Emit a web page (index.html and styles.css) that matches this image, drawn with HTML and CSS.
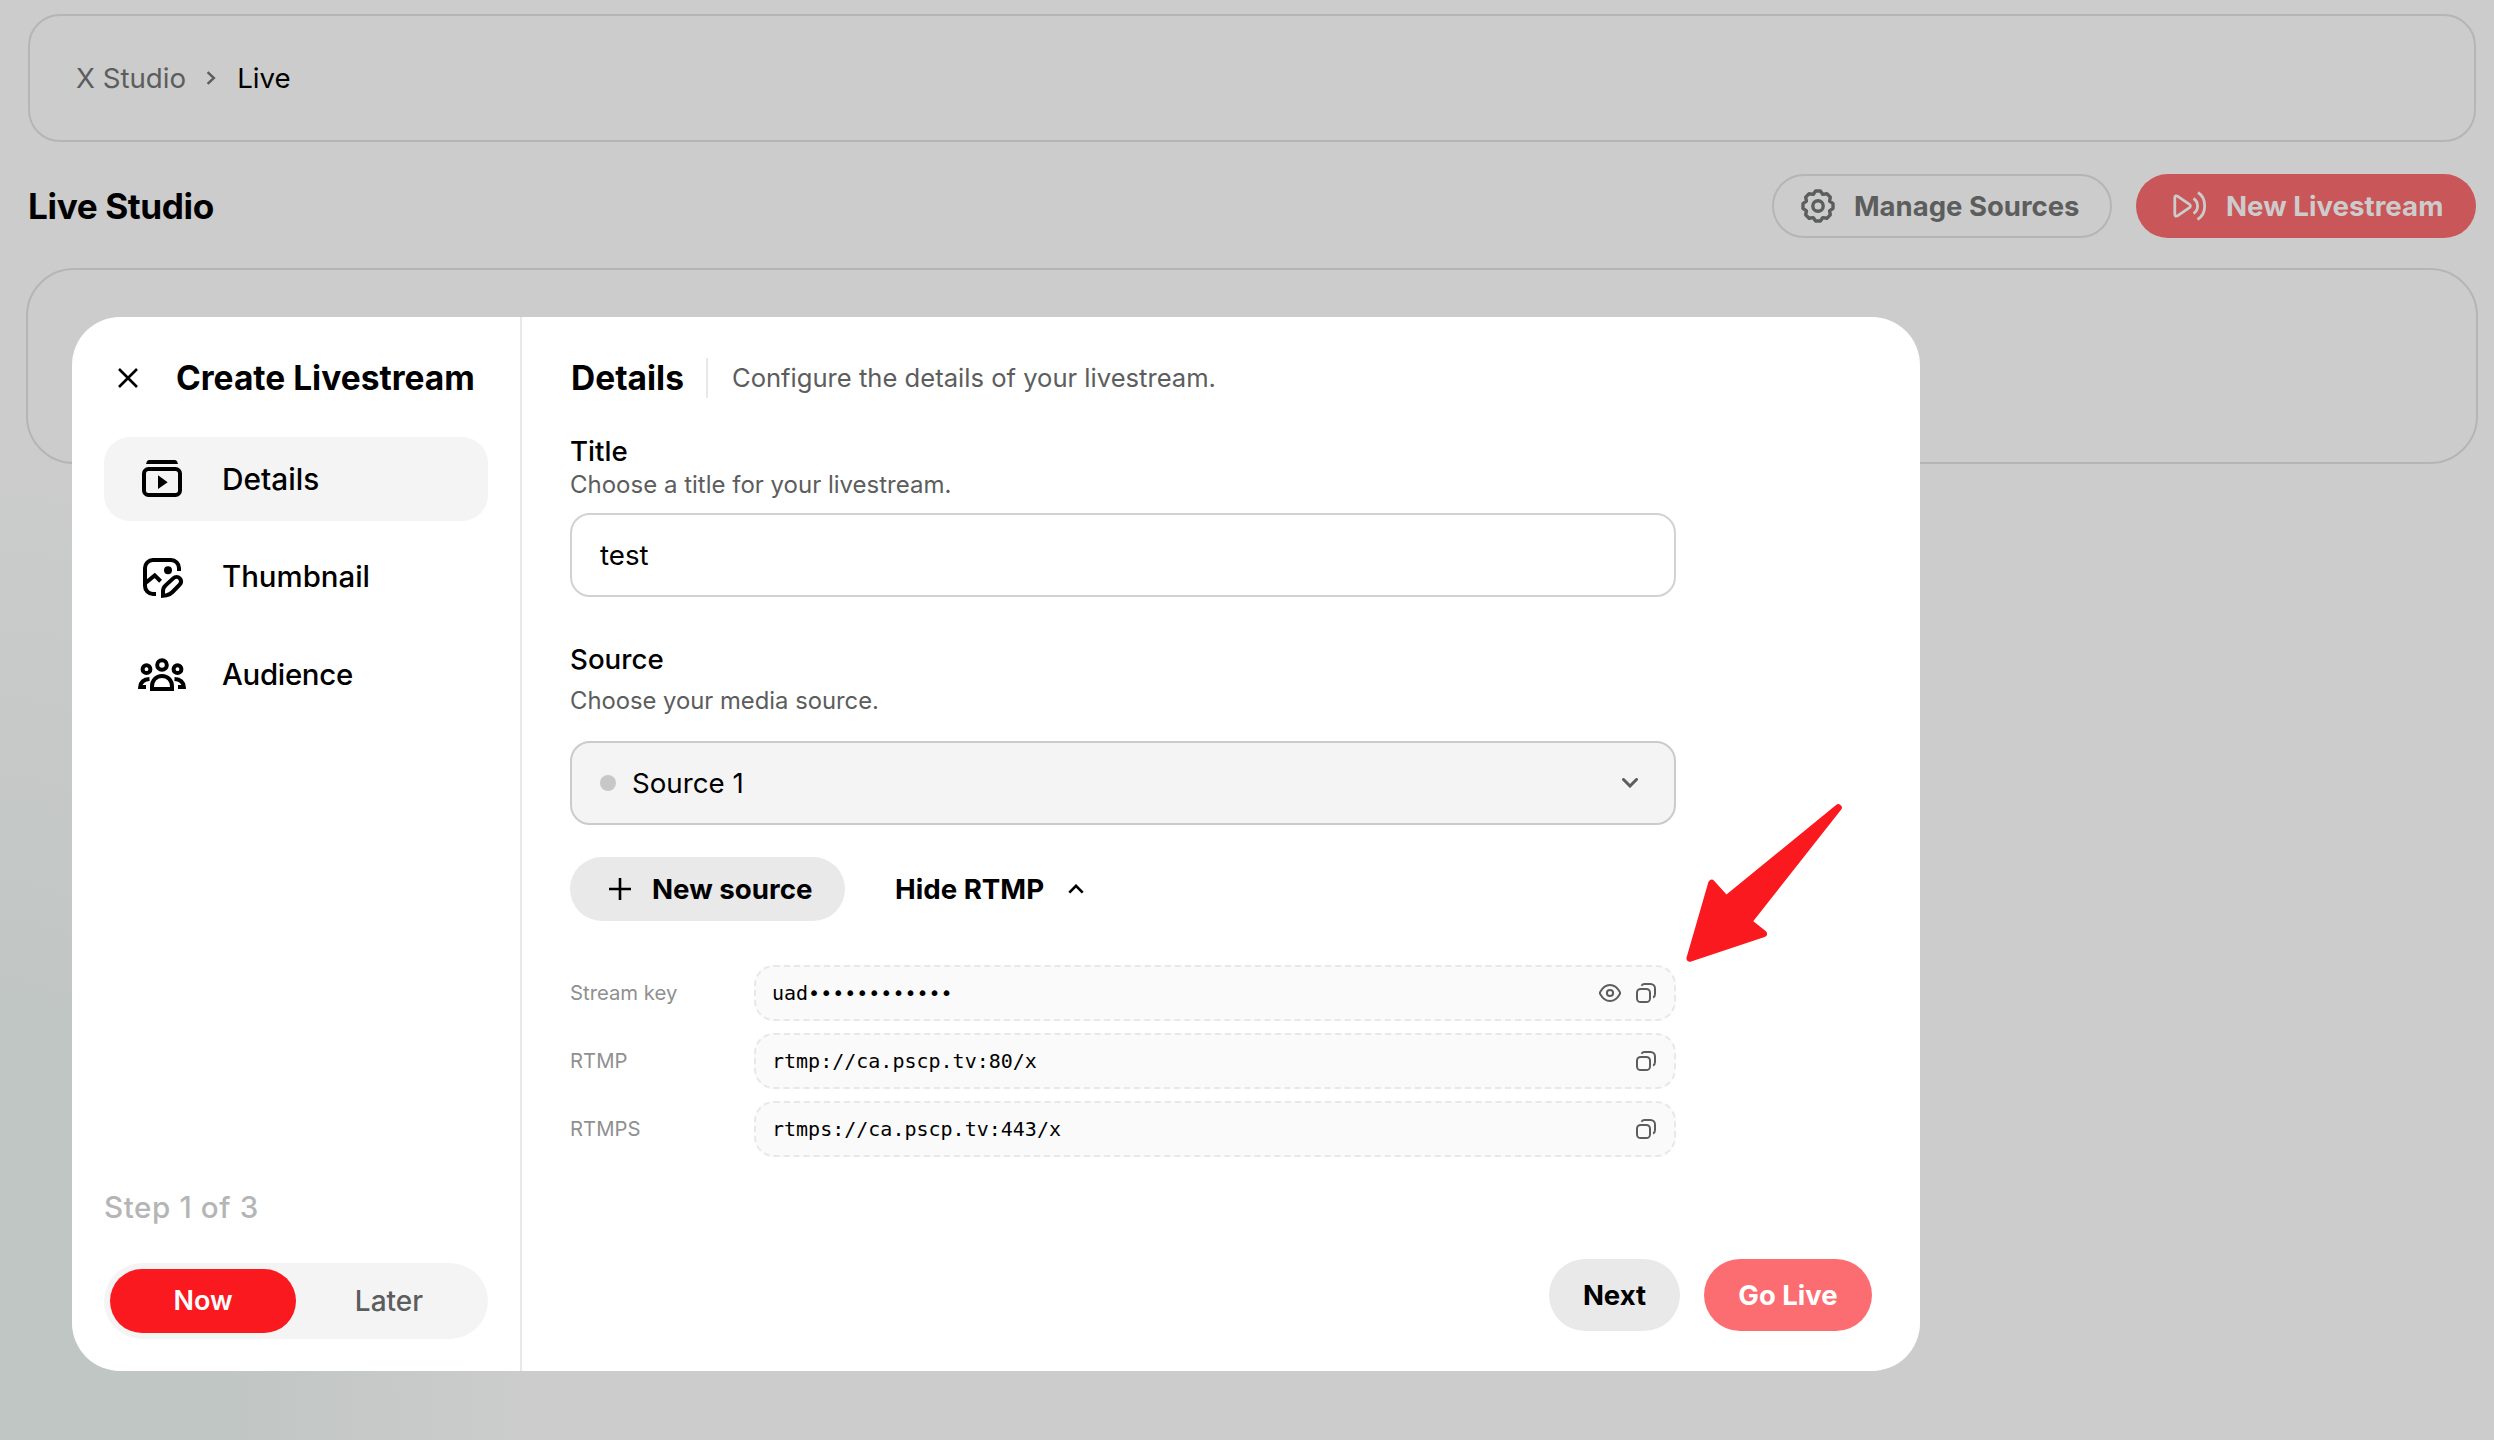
FILE: index.html
```
<!DOCTYPE html>
<html lang="en">
<head>
<meta charset="utf-8">
<title>Live Studio</title>
<link rel="stylesheet" href="styles.css">
</head>
<body>
<svg class="defs" width="0" height="0" aria-hidden="true">
  <symbol id="copy" viewBox="0 0 20 20">
    <rect x="1" y="6" width="13" height="13" rx="3.6"/>
    <path d="M5.5 2.7C6.2 1.5 7 1 8.5 1h6A4.5 4.5 0 0 1 19 5.5V11c0 1.8-.5 2.9-1.9 3.5"/>
  </symbol>
</svg>

<div class="page">
  <header class="crumbs">
    <span class="crumb-parent">X Studio</span>
    <svg class="crumb-sep" width="10" height="14" viewBox="0 0 10 14"><path d="M1.6 1.2 7.9 7l-6.3 5.8"/></svg>
    <span>Live</span>
  </header>
  <div class="toolbar">
    <h1>Live Studio</h1>
    <button class="pill manage">
      <svg width="36" height="36" viewBox="0 0 36 36"><path d="M15.6 3h4.8l2.4 3.4 4.1-.7 3.4 3.4-.7 4.1 3.4 2.4v4.8l-3.4 2.4.7 4.1-3.4 3.4-4.1-.7-2.4 3.4h-4.8l-2.4-3.4-4.1.7-3.4-3.4.7-4.1L3 20.4v-4.8l3.4-2.4-.7-4.1 3.4-3.4 4.1.7z"/><circle cx="18" cy="18" r="5.2"/></svg>
      Manage Sources
    </button>
    <button class="pill new-live">
      <svg width="36" height="36" viewBox="0 0 36 36"><path d="M2.8 9.7v16.6c0 1.9 1.5 2.4 3 1.4l11.7-8.1c1.2-.9 1.2-2.3 0-3.2L5.8 8.3c-1.5-1-3-.5-3 1.4z"/><path d="M21.5 10.5c5.4 3.5 5.4 11.5 0 15M26 4.5c9 5.7 9 21.3-.5 27"/></svg>
      New Livestream
    </button>
  </div>
  <div class="panel"></div>
</div>

<section class="modal" role="dialog">
  <aside class="sidebar">
    <div class="side-head">
      <svg width="20" height="20" viewBox="0 0 20 20"><path d="M1 1l18 18M19 1 1 19"/></svg>
      <h2>Create Livestream</h2>
    </div>
    <nav class="steps">
      <a class="step active">
        <svg width="48" height="48" viewBox="0 0 48 48"><path class="solid" d="M8 9l.9-2.5Q9.5 5 11 5h26q1.500 0 2.100 1.500L40 9zM20 20.300v13.700l9.700-6.800z"/><rect x="6" y="14" width="36" height="26" rx="4.5"/></svg>
        Details
      </a>
      <a class="step">
        <svg width="48" height="48" viewBox="0 0 48 48"><path d="M41 18v-3a8 8 0 0 0-8-8H15a8 8 0 0 0-8 8v18a8 8 0 0 0 8 8h3M7.5 30l9.2-7.6 5.9 5.8"/><circle class="solid" cx="30" cy="17.3" r="4"/><path d="M25 42.8v-4.6c0-2.3.9-4.2 2.6-5.8l7.6-7c2-1.9 4.8-1.9 6.6-.1s1.8 4.4-.1 6.4l-7.2 7.3c-1.7 1.7-3.6 2.9-6 3.3z"/></svg>
        Thumbnail
      </a>
      <a class="step">
        <svg width="48" height="48" viewBox="0 0 48 48"><circle cx="24" cy="14" r="4.8"/><circle cx="8.5" cy="18.2" r="3.9"/><circle cx="39.5" cy="18.2" r="3.9"/><path d="M14 38v-2.5C14 29.3 18.2 25 24 25s10 4.3 10 10.5V38z"/><path d="M11.5 28C6 28.3 2.6 31.2 2.2 36H8M36.5 28c5.5.3 8.9 3.2 9.3 8H40"/></svg>
        <span class="tight">Audience</span>
      </a>
    </nav>
    <p class="progress">Step 1 of 3</p>
    <div class="toggle"><button class="on">Now</button><button>Later</button></div>
  </aside>

  <div class="main">
    <div class="main-head">
      <h2>Details</h2>
      <p>Configure the details of your livestream.</p>
    </div>
    <label class="label">Title</label>
    <p class="hint">Choose a title for your livestream.</p>
    <div class="input">test</div>
    <label class="label source-label">Source</label>
    <p class="hint source-hint">Choose your media source.</p>
    <div class="select">
      <i class="dot"></i><span>Source 1</span>
      <svg width="16" height="10" viewBox="0 0 16 10"><path d="M1.5 1.5 8 8l6.5-6.5"/></svg>
    </div>
    <div class="source-actions">
      <button class="new-source"><svg width="22" height="22" viewBox="0 0 22 22"><path d="M11 0v22M0 11h22"/></svg>New source</button>
      <button class="hide-rtmp">Hide RTMP<svg width="16" height="10" viewBox="0 0 16 10"><path d="M1.3 8.7 8 1.8l6.7 6.9"/></svg></button>
    </div>
    <div class="rows">
      <div class="row"><span class="key">Stream key</span><div class="value"><code>uad••••••••••••</code>
        <svg width="22" height="18" viewBox="0 0 22 18"><path d="M1.3 10.2a2.3 2.3 0 0 1 0-2.4C3.8 3.4 7.1 1 11 1s7.2 2.4 9.7 6.8a2.3 2.3 0 0 1 0 2.4C18.2 14.6 14.9 17 11 17s-7.2-2.4-9.7-6.8z"/><circle cx="11" cy="9" r="3.1"/></svg>
        <svg width="20" height="20"><use href="#copy"/></svg></div></div>
      <div class="row"><span class="key">RTMP</span><div class="value"><code>rtmp://ca.pscp.tv:80/x</code><svg width="20" height="20"><use href="#copy"/></svg></div></div>
      <div class="row"><span class="key">RTMPS</span><div class="value"><code>rtmps://ca.pscp.tv:443/x</code><svg width="20" height="20"><use href="#copy"/></svg></div></div>
    </div>
    <div class="footer"><button class="next">Next</button><button class="go-live">Go Live</button></div>
  </div>
</section>

<svg class="arrow" width="160" height="162" viewBox="0 0 160 162"><path d="M152.3 7.7 40.2 99.3 25.7 83.3 4 158.3l73.500-24.500-15.200-12z"/></svg>
</body>
</html>
```
FILE: styles.css
```
* { box-sizing: border-box; margin: 0; padding: 0; }
body {
  width: 2494px;
  height: 1440px;
  overflow: hidden;
  position: relative;
  color: #000;
  font: 400 27.7px/40px Inter, "Liberation Sans", sans-serif;
  background: radial-gradient(ellipse 540px 1010px at 0 1440px, #c0c6c4 40%, #ccc 100%) #ccc;
}
button { font: inherit; font-size: 27.5px; font-weight: 700; color: inherit; border: 0; background: none; white-space: nowrap; }
svg { fill: none; stroke: currentColor; flex: none; display: block; }
.solid { fill: currentColor; stroke: none; }
.defs { position: absolute; }

/* Page behind the dialog */
.page { padding: 14px 18px 0 28px; }
.crumbs {
  height: 128px;
  border: 2px solid #b4b5b5;
  border-radius: 32px;
  padding-left: 46px;
  display: flex;
  align-items: center;
}
.crumb-parent { color: #5c5d5d; }
.crumb-sep { margin: 0 21px 0 20px; color: #5c5d5d; stroke-width: 2.4; }
.toolbar { display: flex; align-items: center; gap: 24px; margin-top: 32px; height: 64px; }
h1 { flex: 1; font-size: 35.2px; letter-spacing: -0.4px; font-weight: 700; }
.pill { height: 64px; width: 340px; border-radius: 32px; display: flex; align-items: center; gap: 18px; }
.manage { border: 2px solid #b4b5b5; color: #5c5d5d; padding-left: 26px; stroke-width: 3.4; }
.new-live { background: #c95658; color: #ccc; padding-left: 36px; stroke-width: 2.8; font-size: 27.7px; }
.pill svg { stroke-linejoin: round; }
.panel { height: 196px; margin: 30px -2px 0; border: 2px solid #b4b5b5; border-radius: 48px; }

/* Dialog */
.modal {
  position: absolute;
  left: 72px;
  top: 317px;
  width: 1848px;
  height: 1054px;
  display: flex;
  background: #fff;
  border-radius: 48px;
}
h2 { font-size: 33.5px; font-weight: 700; white-space: nowrap; }
.sidebar {
  width: 450px;
  border-right: 2px solid #e8e8e8;
  padding: 0 32px 32px;
  display: flex;
  flex-direction: column;
}
.side-head { height: 120px; padding: 1px 0 0 14px; display: flex; align-items: center; gap: 38px; }
.side-head svg { stroke-width: 2.6; }
.steps { display: flex; flex-direction: column; gap: 14px; }
.step {
  height: 84px;
  border-radius: 26px;
  padding-left: 34px;
  display: flex;
  align-items: center;
  gap: 36px;
  font-size: 29.4px;
  font-weight: 500;
}
.step svg { stroke-width: 4; }
.tight { letter-spacing: -0.3px; }
.active { background: #f4f4f4; font-size: 29.8px; }
.progress { margin: auto 0 36px; font-size: 29.6px; font-weight: 500; letter-spacing: 0.6px; color: #b4b5b5; }
.toggle { height: 76px; border-radius: 38px; padding: 6px; background: #f4f4f4; display: flex; }
.toggle button { flex: 1; border-radius: 32px; font-weight: 500; font-size: 28px; color: #5c5d5d; }
.toggle .on { background: #fb1920; color: #fff; font-weight: 600; font-size: 27px; }

.main { flex: 1; padding: 0 48px 40px; display: flex; flex-direction: column; }
.main-head { height: 114px; padding-top: 7px; display: flex; align-items: center; }
.main-head h2 { padding-left: 1px; }
.main-head p { margin-left: 22px; padding-left: 24px; border-left: 2px solid #e8e8e8; font-size: 25.6px; color: #5c5d5d; }
.label { font-weight: 500; }
.hint { font-size: 24px; line-height: 28px; color: #5c5d5d; }
.input, .select {
  width: 1106px;
  height: 84px;
  border: 2px solid #cacbcb;
  border-radius: 20px;
  display: flex;
  align-items: center;
  padding: 0 36px 0 28px;
}
.input { margin-top: 14px; border-color: #d2d2d2; }
.source-label { margin-top: 42px; }
.source-hint { margin: 8px 0 26px; font-size: 23.8px; }
.select { background: #f4f4f4; gap: 16px; }
.select span { flex: 1; }
.select svg { color: #5c5d5d; stroke-width: 3; stroke-linecap: round; }
.dot { width: 16px; height: 16px; border-radius: 50%; background: #c6c8c7; }
.source-actions { margin-top: 32px; display: flex; }
.source-actions button { height: 64px; display: flex; align-items: center; font-size: 27.7px; }
.new-source { width: 275px; border-radius: 32px; background: #e9e9e9; padding-left: 39px; gap: 21px; }
.new-source svg, .hide-rtmp svg { stroke-width: 2.6; }
.hide-rtmp { margin-left: 50px; gap: 24px; }
.rows { width: 1106px; margin-top: 44px; display: flex; flex-direction: column; gap: 12px; }
.row { display: grid; grid-template-columns: 184px 1fr; align-items: center; }
.key { font-size: 20.3px; color: #8f9090; }
.value {
  height: 56px;
  border: 2px dashed #e8e8e8;
  border-radius: 20px;
  background: #fafafa;
  padding: 0 18px 0 16px;
  display: flex;
  align-items: center;
  gap: 15px;
}
.value svg { color: #5c5d5d; stroke-width: 2; }
code { flex: 1; font: 20px/30px "DejaVu Sans Mono", monospace; }
.footer { margin-top: auto; display: flex; justify-content: flex-end; gap: 24px; }
.footer button { height: 72px; border-radius: 36px; }
.next { width: 131px; background: #e9e9e9; }
.go-live { width: 168px; background: #fc6d71; color: #fff; }

.arrow { position: absolute; left: 1686px; top: 800px; fill: #fb1920; stroke: #fb1920; stroke-width: 7; stroke-linejoin: round; }
```
